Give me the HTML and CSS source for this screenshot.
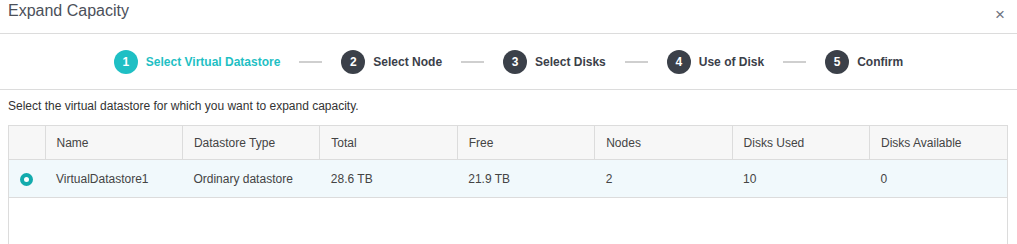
FILE: index.html
```html
<!DOCTYPE html>
<html lang="en">

<head>
    <meta charset="UTF-8">
    <title>Expand Capacity</title>
    <link rel="stylesheet" href="styles.css">
</head>

<body>

    <div class="dialog-head">
        <span class="dialog-title">Expand Capacity</span>
        <span class="dialog-close">&#215;</span>
    </div>

    <div class="steps">
        <div class="step active"><span class="step-num">1</span><span class="step-label">Select Virtual Datastore</span></div>
        <span class="step-line"></span>
        <div class="step"><span class="step-num">2</span><span class="step-label">Select Node</span></div>
        <span class="step-line"></span>
        <div class="step"><span class="step-num">3</span><span class="step-label">Select Disks</span></div>
        <span class="step-line"></span>
        <div class="step"><span class="step-num">4</span><span class="step-label">Use of Disk</span></div>
        <span class="step-line"></span>
        <div class="step"><span class="step-num">5</span><span class="step-label">Confirm</span></div>
    </div>

    <p class="hint">Select the virtual datastore for which you want to expand capacity.</p>

    <div class="grid">
        <table>
            <colgroup>
                <col class="col-check">
                <col><col><col><col><col><col><col>
            </colgroup>
            <thead>
                <tr>
                    <th></th>
                    <th>Name</th>
                    <th>Datastore Type</th>
                    <th>Total</th>
                    <th>Free</th>
                    <th>Nodes</th>
                    <th>Disks Used</th>
                    <th>Disks Available</th>
                </tr>
            </thead>
            <tbody>
                <tr class="selected">
                    <td><span class="radio"></span></td>
                    <td>VirtualDatastore1</td>
                    <td>Ordinary datastore</td>
                    <td>28.6 TB</td>
                    <td>21.9 TB</td>
                    <td>2</td>
                    <td>10</td>
                    <td>0</td>
                </tr>
            </tbody>
        </table>
    </div>

</body>

</html>
```

FILE: styles.css
```css
body,
html {
    margin: 0;
    padding: 0;
    height: 100%;
    width: 100%;
    font-family: "Liberation Sans", Arial, sans-serif;
    background-color: #fff;
    overflow: hidden;
}

.dialog-head {
    height: 33px;
    border-bottom: 1px solid #dcdcdc;
    display: flex;
    justify-content: space-between;
    padding: 0 12px 0 8px;
}

.dialog-title {
    font-size: 16px;
    line-height: 22px;
    color: #4b505a;
}

.dialog-close {
    font-size: 17px;
    line-height: 29px;
    color: #6e7380;
}

.steps {
    height: 55px;
    border-bottom: 1px solid #dcdcdc;
    display: flex;
    align-items: center;
    justify-content: center;
    gap: 19px;
}

.step {
    display: flex;
    align-items: center;
    gap: 8px;
    font-size: 12px;
    font-weight: bold;
    color: #3b4049;
}

.step-num {
    width: 24px;
    height: 24px;
    border-radius: 50%;
    background-color: #3b4049;
    color: #fff;
    display: flex;
    align-items: center;
    justify-content: center;
}

.step.active {
    color: #1fbfc4;
}

.step.active .step-num {
    background-color: #1fbfc4;
}

.step-line {
    width: 23px;
    height: 2px;
    background-color: #cfcfcf;
}

.hint {
    margin: 0;
    padding: 9px 8px 0;
    height: 26px;
    font-size: 12px;
    color: #333;
}

.grid {
    margin: 0 9px 0 8px;
    height: 120px;
    border: 1px solid #dcdcdc;
    border-bottom: none;
}

table {
    width: 100%;
    border-collapse: collapse;
    table-layout: fixed;
    font-size: 12px;
    color: #444;
}

.col-check {
    width: 36px;
}

th {
    height: 33px;
    padding: 0 11px;
    text-align: left;
    font-weight: normal;
    background-color: #f7f7f7;
    border-bottom: 1px solid #dcdcdc;
    border-left: 1px solid #dcdcdc;
}

th:first-child {
    border-left: none;
}

td {
    height: 37px;
    padding: 0 11px;
    border-bottom: 1px solid #dcdcdc;
}

tr.selected td {
    background-color: #f1f9fc;
}

.radio {
    display: block;
    width: 5px;
    height: 5px;
    border: 4px solid #13abad;
    border-radius: 50%;
    background-color: #fff;
    margin-top: 1px;
}
```
